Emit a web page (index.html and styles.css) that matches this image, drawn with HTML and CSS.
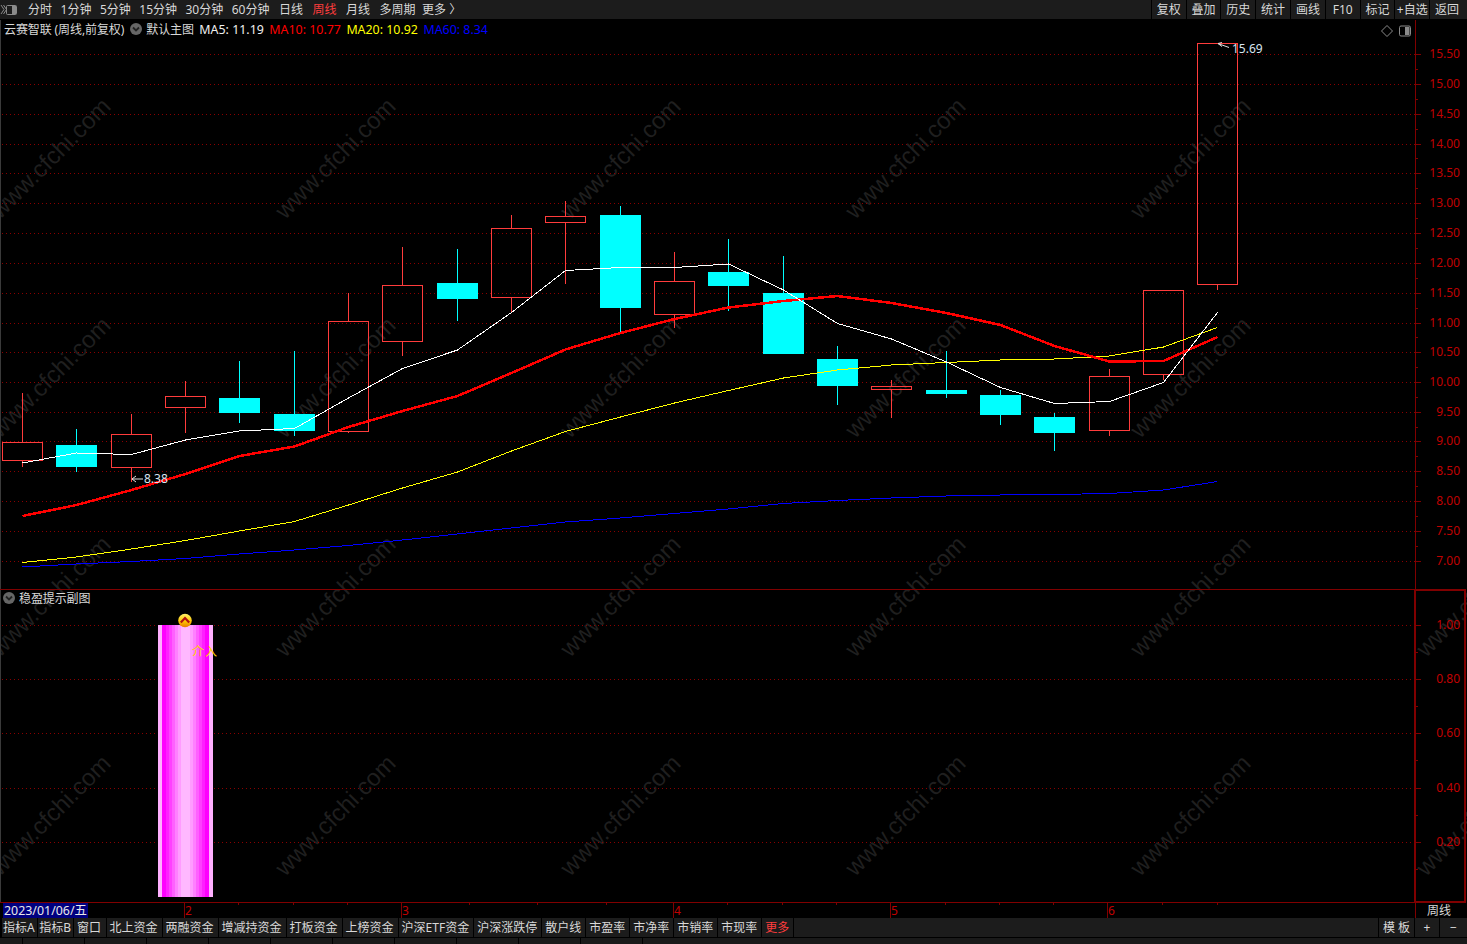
FILE: index.html
```html
<!DOCTYPE html>
<html lang="zh-CN">
<head>
<meta charset="utf-8">
<title>云赛智联 周线</title>
<link rel="stylesheet" href="styles.css">
</head>
<body>
<div class="app">
  <header class="topbar">
    <svg class="collapse-icon" width="18" height="19" viewBox="0 0 18 19"><path class="ci-line" d="M1 5l3 4.500-3 4.500M3.500 5l3 4.500-3 4.500"/><rect class="ci-box" x="6.500" y="5.500" width="10" height="9" rx="1"/><rect class="ci-fill" x="12" y="6" width="4" height="8"/></svg>
    <nav class="periods">
      <span>分时</span><span>1分钟</span><span>5分钟</span><span>15分钟</span><span>30分钟</span><span>60分钟</span>
      <span class="wide">日线</span><span class="wide active">周线</span><span class="wide">月线</span><span class="wide">多周期</span><span class="last">更多 〉</span>
    </nav>
    <div class="tools">
      <span>复权</span><span>叠加</span><span>历史</span><span>统计</span><span>画线</span><span>F10</span><span>标记</span><span>+自选</span><span>返回</span>
    </div>
  </header>

  <main class="chart">
    <svg class="canvas" viewBox="0 20 1467 898" width="1467" height="898">
      <g class="wm">
        <text transform="rotate(-45 50 158)" x="50" y="158">www.cfchi.com</text>
        <text transform="rotate(-45 335 158)" x="335" y="158">www.cfchi.com</text>
        <text transform="rotate(-45 620 158)" x="620" y="158">www.cfchi.com</text>
        <text transform="rotate(-45 905 158)" x="905" y="158">www.cfchi.com</text>
        <text transform="rotate(-45 1190 158)" x="1190" y="158">www.cfchi.com</text>
        <text transform="rotate(-45 50 377)" x="50" y="377">www.cfchi.com</text>
        <text transform="rotate(-45 335 377)" x="335" y="377">www.cfchi.com</text>
        <text transform="rotate(-45 620 377)" x="620" y="377">www.cfchi.com</text>
        <text transform="rotate(-45 905 377)" x="905" y="377">www.cfchi.com</text>
        <text transform="rotate(-45 1190 377)" x="1190" y="377">www.cfchi.com</text>
        <text transform="rotate(-45 50 596)" x="50" y="596">www.cfchi.com</text>
        <text transform="rotate(-45 335 596)" x="335" y="596">www.cfchi.com</text>
        <text transform="rotate(-45 620 596)" x="620" y="596">www.cfchi.com</text>
        <text transform="rotate(-45 905 596)" x="905" y="596">www.cfchi.com</text>
        <text transform="rotate(-45 1190 596)" x="1190" y="596">www.cfchi.com</text>
        <text transform="rotate(-45 1476 596)" x="1476" y="596">www.cfchi.com</text>
        <text transform="rotate(-45 50 815)" x="50" y="815">www.cfchi.com</text>
        <text transform="rotate(-45 335 815)" x="335" y="815">www.cfchi.com</text>
        <text transform="rotate(-45 620 815)" x="620" y="815">www.cfchi.com</text>
        <text transform="rotate(-45 905 815)" x="905" y="815">www.cfchi.com</text>
        <text transform="rotate(-45 1190 815)" x="1190" y="815">www.cfchi.com</text>
        <text transform="rotate(-45 1476 815)" x="1476" y="815">www.cfchi.com</text>
      </g>

      <path class="edge" d="M0.500 20V902"/>

      <path class="grid" d="M2 54.500H1415M2 84.500H1415M2 114.500H1415M2 144.500H1415M2 173.500H1415M2 203.500H1415M2 233.500H1415M2 263.500H1415M2 293.500H1415M2 323.500H1415M2 352.500H1415M2 382.500H1415M2 412.500H1415M2 441.500H1415M2 471.500H1415M2 501.500H1415M2 531.500H1415M2 561.500H1415M2 625.500H1415M2 679.500H1415M2 733.500H1415M2 788.500H1415M2 842.500H1415"/>

      <path class="axis" d="M1415.500 20V590M0 589.500H1415M0 902.500H1415M1415.500 902V918"/>
      <rect class="axis-box" x="1415" y="590" width="49.500" height="312"/>
      <path class="axis" d="M1415 54.500h6M1415 84.500h6M1415 114.500h6M1415 144.500h6M1415 173.500h6M1415 203.500h6M1415 233.500h6M1415 263.500h6M1415 293.500h6M1415 323.500h6M1415 352.500h6M1415 382.500h6M1415 412.500h6M1415 441.500h6M1415 471.500h6M1415 501.500h6M1415 531.500h6M1415 561.500h6M1415 69.500h3M1415 99.500h3M1415 129.500h3M1415 158.500h3M1415 188.500h3M1415 218.500h3M1415 248.500h3M1415 278.500h3M1415 308.500h3M1415 337.500h3M1415 367.500h3M1415 397.500h3M1415 427.500h3M1415 456.500h3M1415 486.500h3M1415 516.500h3M1415 546.500h3M1415 625.500h6M1415 679.500h6M1415 733.500h6M1415 788.500h6M1415 842.500h6M1415 652.500h3M1415 706.500h3M1415 760.500h3M1415 815.500h3M1415 869.500h3"/>
      <path class="axis" d="M238.500 902v3M293.500 902v3M347.500 902v3M469.500 902v3M537.500 902v3M606.500 902v3M727.500 902v3M782.500 902v3M836.500 902v3M945.500 902v3M999.500 902v3M1053.500 902v3M1162.500 902v3M1217.500 902v3M3.500 902V918M184.500 902V918M401.500 902V918M673.500 902V918M890.500 902V918M1107.500 902V918"/>

      <g class="price">
        <text x="1460" y="58">15.50</text><text x="1460" y="88">15.00</text><text x="1460" y="118">14.50</text><text x="1460" y="148">14.00</text><text x="1460" y="177">13.50</text><text x="1460" y="207">13.00</text><text x="1460" y="237">12.50</text><text x="1460" y="267">12.00</text><text x="1460" y="297">11.50</text><text x="1460" y="327">11.00</text><text x="1460" y="356">10.50</text><text x="1460" y="386">10.00</text><text x="1460" y="416">9.50</text><text x="1460" y="445">9.00</text><text x="1460" y="475">8.50</text><text x="1460" y="505">8.00</text><text x="1460" y="535">7.50</text><text x="1460" y="565">7.00</text>
        <text x="1460" y="629">1.00</text><text x="1460" y="683">0.80</text><text x="1460" y="737">0.60</text><text x="1460" y="792">0.40</text><text x="1460" y="846">0.20</text>
      </g>

      <g class="time-labels">
        <text x="185" y="915">2</text><text x="402" y="915">3</text><text x="674" y="915">4</text><text x="891" y="915">5</text><text x="1108" y="915">6</text>
      </g>
      <rect class="date-bg" x="3" y="903" width="85" height="15"/>
      <text class="date" x="4" y="915">2023/01/06/五</text>
      <text class="freq" x="1427" y="915">周线</text>

      <path class="wick-red" d="M22.500 393V442M22.500 461V467M131.500 414V434M131.500 468V482M185.500 381V396M185.500 408V433M348.500 293V321M348.500 432V433M402.500 247V285M402.500 342V356M511.500 215V228M511.500 298V313M565.500 201V216M565.500 223V284M674.500 252V281M674.500 315V328M891.500 380V386M891.500 390V418M1109.500 369V376M1109.500 431V436M1163.500 375V380M1217.500 285V290"/>
      <g class="body-red">
        <rect x="2.500" y="442.500" width="40" height="18"/>
        <rect x="111.500" y="434.500" width="40" height="33"/>
        <rect x="165.500" y="396.500" width="40" height="11"/>
        <rect x="328.500" y="321.500" width="40" height="110"/>
        <rect x="382.500" y="285.500" width="40" height="56"/>
        <rect x="491.500" y="228.500" width="40" height="69"/>
        <rect x="545.500" y="216.500" width="40" height="6"/>
        <rect x="654.500" y="281.500" width="40" height="33"/>
        <rect x="871.500" y="386.500" width="40" height="3"/>
        <rect x="1089.500" y="376.500" width="40" height="54"/>
        <rect x="1143.500" y="290.500" width="40" height="84"/>
        <rect x="1197.500" y="43.500" width="40" height="241"/>
      </g>
      <path class="wick-cyan" d="M76.500 429V472M239.500 361V423M294.500 351V436M457.500 249V321M620.500 206V332M728.500 239V311M783.500 256V293M837.500 346V405M946.500 351V398M1000.500 390V425M1054.500 413V451"/>
      <g class="body-cyan">
        <rect x="56" y="445" width="41" height="22"/>
        <rect x="219" y="398" width="41" height="15"/>
        <rect x="274" y="414" width="41" height="17"/>
        <rect x="437" y="283" width="41" height="16"/>
        <rect x="600" y="215" width="41" height="93"/>
        <rect x="708" y="272" width="41" height="14"/>
        <rect x="763" y="293" width="41" height="61"/>
        <rect x="817" y="359" width="41" height="27"/>
        <rect x="926" y="390" width="41" height="4"/>
        <rect x="980" y="395" width="41" height="20"/>
        <rect x="1034" y="417" width="41" height="16"/>
      </g>

      <polyline class="ma ma60" points="22.500,567 76.500,564 131.500,561.500 185.500,558.500 239.500,554 294.500,550 348.500,545.500 402.500,540 457.500,534 511.500,528 565.500,522 620.500,518 674.500,513.500 728.500,509 783.500,503.500 837.500,500.500 891.500,498 946.500,496 1000.500,495 1054.500,494.500 1109.500,493.500 1163.500,490 1217.500,481.500"/>
      <polyline class="ma ma20" points="22.500,562.500 76.500,557 131.500,549 185.500,540.500 239.500,531 294.500,521.500 348.500,505 402.500,488 457.500,472 511.500,451 565.500,431.500 620.500,417 674.500,403 728.500,390.500 783.500,378 837.500,370 891.500,365 946.500,362.500 1000.500,360 1054.500,359 1109.500,356 1163.500,347 1217.500,327.500"/>
      <polyline class="ma ma10" points="22.500,516 76.500,505 131.500,490 185.500,474 239.500,456 294.500,446.500 348.500,427 402.500,411 457.500,396 511.500,373 565.500,349.500 620.500,333 674.500,319 728.500,307.500 783.500,301 837.500,296 891.500,303 946.500,313 1000.500,325 1054.500,346 1109.500,361.500 1163.500,361 1217.500,337"/>
      <polyline class="ma ma5" points="22.500,463 76.500,453 131.500,454.500 185.500,440 239.500,431 294.500,428.500 348.500,398 402.500,368.500 457.500,350 511.500,312.500 565.500,270.500 620.500,267.500 674.500,267.500 728.500,264 783.500,290 837.500,323.500 891.500,339 946.500,362 1000.500,387.500 1054.500,403.500 1109.500,401.500 1163.500,382.500 1217.500,312.500"/>

      <path class="marker" d="M1218 43.500l4 3M1218 43.500l4-1M1218 43.500l11 4"/>
      <text class="mark-text" x="1232" y="53">15.69</text>
      <path class="marker" d="M132 479H143M132 479l4-3M132 479l4 3"/>
      <text class="mark-text" x="144" y="483">8.38</text>
    </svg>

    <div class="legend legend-main">
      <span class="stock">云赛智联 (周线,前复权)</span>
      <svg class="fold" width="12" height="12" viewBox="0 0 12 12"><circle class="fold-c" cx="6" cy="6" r="6"/><path class="fold-a" d="M3 4.500l3 3 3-3"/></svg>
      <span class="stock">默认主图</span>
      <span class="val white">MA5: 11.19</span>
      <span class="val red">MA10: 10.77</span>
      <span class="val yellow">MA20: 10.92</span>
      <span class="val blue">MA60: 8.34</span>
    </div>
    <svg class="pane-tools" width="32" height="12" viewBox="0 0 32 12"><path class="pt-line" d="M6 .5l5.500 5.500-5.500 5.500-5.500-5.500z"/><rect class="pt-box" x="18.500" y="1" width="11" height="10" rx="1.500"/><rect class="pt-fill" x="24" y="2" width="4.500" height="8"/></svg>

    <div class="legend legend-sub">
      <svg class="fold" width="12" height="12" viewBox="0 0 12 12"><circle class="fold-c" cx="6" cy="6" r="6"/><path class="fold-a" d="M3 4.500l3 3 3-3"/></svg>
      <span class="stock">稳盈提示副图</span>
    </div>

    <div class="signal-bar"></div>
    <svg class="signal-icon" width="14" height="15" viewBox="0 0 14 15">
      <defs><linearGradient id="sig" x1="0" y1="0" x2="0" y2="1"><stop class="sig-a" offset="0"/><stop class="sig-b" offset=".55"/><stop class="sig-c" offset="1"/></linearGradient></defs>
      <circle cx="7" cy="7.500" r="6.800" fill="url(#sig)"/>
      <path class="sig-arrow" d="M2.800 9.500L7 5l4.200 4.500"/>
    </svg>
    <span class="signal-text">介入</span>
  </main>

  <footer class="tabs">
    <span class="tight">指标A</span><span class="tight">指标B</span><span class="snug">窗口</span><span>北上资金</span><span>两融资金</span><span>增减持资金</span><span>打板资金</span><span>上榜资金</span><span>沪深ETF资金</span><span>沪深涨跌停</span><span>散户线</span><span>市盈率</span><span>市净率</span><span>市销率</span><span>市现率</span><span class="more">更多</span>
    <div class="tabs-right"><span class="tpl">模 板</span><span class="zoom-btn">+</span><span class="zoom-btn last">−</span></div>
  </footer>
  <div class="status"><div class="status-cells"></div></div>
</div>
</body>
</html>
```
FILE: styles.css
```css
* { box-sizing: border-box; }
html, body { margin: 0; padding: 0; background: #000; }
body {
  width: 1467px;
  height: 944px;
  overflow: hidden;
  font-family: "Noto Sans", "Noto Sans CJK SC", sans-serif;
  font-size: 12px;
  color: #d8d8d8;
}
.app { display: flex; flex-direction: column; height: 944px; }

/* top bar */
.topbar {
  display: flex;
  align-items: center;
  height: 20px;
  flex: none;
  background: #1c1c1c;
  border-bottom: 1px solid #000;
  line-height: 19px;
}
.collapse-icon { flex: none; }
.ci-line { fill: none; stroke: #8a8a8a; stroke-width: 1; }
.ci-box { fill: none; stroke: #8a8a8a; stroke-width: 1; }
.ci-fill { fill: #8a8a8a; }
.periods { display: flex; gap: 8.5px; margin-left: 10px; white-space: nowrap; }
.periods .wide { margin-left: 1px; }
.periods .active { color: #ff3c3c; }
.periods .last { margin-left: -2px; }
.tools { display: flex; margin-left: auto; margin-right: 3px; height: 19px; }
.tools span {
  width: 34.8px;
  text-align: center;
  border-left: 1px solid #000;
  white-space: nowrap;
}

/* chart */
.chart { position: relative; height: 898px; flex: none; overflow: hidden; }
.canvas { display: block; }
.wm text {
  font-family: "Liberation Sans", sans-serif;
  font-size: 24px;
  fill: #1f1f1f;
  text-anchor: middle;
  dominant-baseline: central;
}
.edge { stroke: #3a3a3a; stroke-width: 1; shape-rendering: crispEdges; }
.grid { stroke: #8a0000; stroke-width: 1; stroke-dasharray: 1 3; fill: none; shape-rendering: crispEdges; }
.axis { stroke: #800000; stroke-width: 1; fill: none; shape-rendering: crispEdges; }
.axis-box { stroke: #800000; stroke-width: 2; fill: none; shape-rendering: crispEdges; }
.price text { font-size: 12px; fill: #c00000; text-anchor: end; }
.time-labels text { font-size: 12px; fill: #c00000; }
.date-bg { fill: #000080; }
.date { font-size: 12.400px; fill: #e8e8e8; }
.freq { font-size: 12px; fill: #d8d8d8; }
.wick-red { stroke: #ff3c3c; stroke-width: 1; fill: none; shape-rendering: crispEdges; }
.body-red rect { stroke: #ff3c3c; stroke-width: 1; fill: none; shape-rendering: crispEdges; }
.wick-cyan { stroke: #00ffff; stroke-width: 1; fill: none; shape-rendering: crispEdges; }
.body-cyan rect { fill: #00ffff; shape-rendering: crispEdges; }
.ma { fill: none; shape-rendering: crispEdges; stroke-width: 1; }
.ma5 { stroke: #ffffff; }
.ma10 { stroke: #ff0000; stroke-width: 2.5; }
.ma20 { stroke: #ffff00; }
.ma60 { stroke: #0000ff; }
.marker { stroke: #e0e0e0; stroke-width: 1; fill: none; }
.mark-text { font-size: 12px; fill: #d8e4f0; }

/* overlays on the chart */
.legend {
  position: absolute;
  display: flex;
  align-items: center;
  white-space: nowrap;
  height: 18px;
}
.legend-main { left: 4px; top: 0; }
.legend-sub { left: 3px; top: 569px; }
.stock { color: #d8d8d8; letter-spacing: -.1px; }
.fold { flex: none; }
.legend-main .fold { margin: 0 4px 0 6px; }
.legend-sub .fold { margin: 0 4px 0 0; }
.fold-c { fill: #666; }
.fold-a { fill: none; stroke: #222; stroke-width: 1.800; }
.val { font-size: 12.400px; margin-left: 5.500px; }
.white { color: #f0f0f0; }
.red { color: #ff0000; }
.yellow { color: #ffff00; }
.blue { color: #0000ff; }
.pane-tools { position: absolute; left: 1381px; top: 5px; }
.pt-line { fill: none; stroke: #8a8a8a; stroke-width: 1; }
.pt-box { fill: none; stroke: #8a8a8a; stroke-width: 1; }
.pt-fill { fill: #8a8a8a; }

.signal-bar {
  position: absolute;
  left: 158px;
  top: 605px;
  width: 55px;
  height: 272px;
  background: linear-gradient(90deg,
    #ffb0ff 0 4px, #ff00ff 4px 8px, #ff20ff 8px 11px, #ff40ff 11px 14px,
    #ff60ff 14px 17px, #ff80ff 17px 20px, #ff9cff 20px 23px, #ffb8ff 23px 32px,
    #ff9cff 32px 35px, #ff80ff 35px 38px, #ff60ff 38px 41px, #ff40ff 41px 44px,
    #ff20ff 44px 47px, #ff00ff 47px 51px, #ffb0ff 51px 55px);
}
.signal-icon { position: absolute; left: 178px; top: 593px; }
.sig-a { stop-color: #fff06a; }
.sig-b { stop-color: #ffc800; }
.sig-c { stop-color: #e87a00; }
.sig-arrow { fill: none; stroke: #b01010; stroke-width: 2.200; }
.signal-text {
  position: absolute;
  left: 192px;
  top: 624px;
  letter-spacing: 1px;
  line-height: 16px;
  color: #ffd000;
}

/* bottom tabs */
.tabs {
  display: flex;
  flex: none;
  height: 20px;
  background: #1c1c1c;
  border-bottom: 1px solid #000;
  border-left: 2px solid #000;
  line-height: 19px;
  white-space: nowrap;
}
.tabs > span { padding: 0 4px 0 3px; border-right: 1px solid #000; }
.tabs > span.tight { padding: 0 2.500px 0 1px; }
.tabs > span.snug { padding: 0 4.500px 0 2.500px; }
.tabs > span.more { color: #ff3c3c; }
.tabs-right { display: flex; margin-left: auto; }
.tabs-right span { border-left: 1px solid #000; text-align: center; }
.tpl { width: 36px; }
.zoom-btn { width: 25px; }
.zoom-btn.last { width: 28px; }

.status { flex: none; height: 6px; background: #1a1a1a; }
.status-cells {
  width: 643px;
  height: 6px;
  background: repeating-linear-gradient(90deg, #000 0 1px, #1a1a1a 1px 62px) 22px 0;
}
```
